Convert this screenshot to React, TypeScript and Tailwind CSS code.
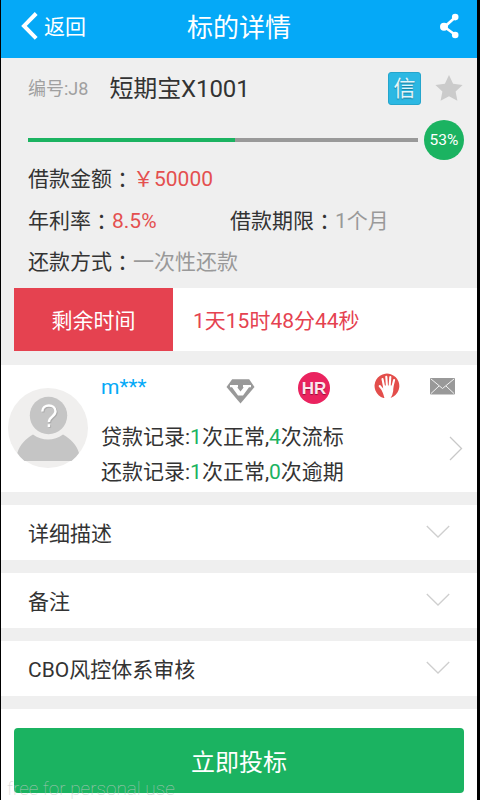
import type { ReactNode } from 'react';

const sections = ['详细描述', '备注', 'CBO风控体系审核'];

const records = [
  { label: '贷款记录', normal: 1, bad: 4, badLabel: '次流标' },
  { label: '还款记录', normal: 1, bad: 0, badLabel: '次逾期' },
];

// The TC face keeps the full-width colon centred in its box
function Label({ children }: { children: ReactNode }) {
  return (
    <span className="text-[#333]">
      {children}
      <span className="relative top-px font-['Noto_Sans_CJK_TC',sans-serif]">：</span>
    </span>
  );
}

function BackIcon() {
  return (
    <svg className="h-7 w-[17px]" viewBox="0 0 17 28" fill="none">
      <path d="M15.2 1.5 3 13.9l12.2 12.4" stroke="#fff" strokeWidth="4" />
    </svg>
  );
}

function ShareIcon() {
  return (
    <svg className="h-[26px] w-5" viewBox="0 0 20 26" fill="#fff">
      <path d="M15.5 4 4.5 14l11 8" fill="none" stroke="#fff" strokeWidth="2.6" />
      <circle cx="15.2" cy="4.1" r="3.3" />
      <circle cx="4" cy="13.8" r="4" />
      <circle cx="15.2" cy="22" r="3.3" />
    </svg>
  );
}

function StarIcon() {
  return (
    <svg className="h-[26px] w-7" viewBox="0 0 28 26" fill="#cbcbcb">
      <path d="m14 0 4.1 8.8 9.5 1.2-7 6.5 1.8 9.3-8.4-4.6-8.4 4.6 1.8-9.3-7-6.5 9.5-1.2z" />
    </svg>
  );
}

function Avatar() {
  return (
    <svg className="h-20 w-20" viewBox="0 0 80 80">
      <circle cx="40" cy="40" r="40" fill="#f0efee" />
      <path d="M9.3 65C12 57 17 51 25 46.5c9 6.7 21 6.7 30 0 8 4.5 13.5 10.5 16 18.5q-3 4.5-7.5 8h-47Q12 69.5 9.3 65z" fill="#c5c5c5" />
      <circle cx="40.5" cy="27.5" r="18.7" fill="#c5c5c5" />
      <path d="M35.3 24.5c0-8 13.2-8 13.2-.2 0 5.2-6.6 5.5-6.6 10.7M41.9 37.3v2.5" fill="none" stroke="#acacac" strokeWidth="2.4" />
      <path d="M34.3 23.5c0-8 13.2-8 13.2-.2 0 5.2-6.6 5.5-6.6 10.7M40.9 36.3v2.6" fill="none" stroke="#fff" strokeWidth="2.4" />
    </svg>
  );
}

function DiamondIcon() {
  return (
    <svg className="h-[25px] w-[29px]" viewBox="0 0 29 25">
      <path d="M6.2.3h17L28.5 8l-14 16.500L.5 8z" fill="#999" />
      <path d="M4 6h8v2.300h-.8l3.300 4.200 3.300-4.200H17V6h8v2.300h-2l-6 8.200h-5L6 8.300H4z" fill="#fff" />
    </svg>
  );
}

function HandIcon() {
  return (
    <svg className="h-[26px] w-[26px]" viewBox="0 0 26 26">
      <path d="M9.5 24.9A12.4 12.4 0 1 1 19.5 23.5L16.5 25z" fill="#e34e4b" />
      <g fill="none" stroke="#fff" strokeLinecap="round" strokeWidth="2.1">
        <path d="M10.3 15 8.5 6M13 14l-.7-10.3M15.6 14l.7-10M18 15.5l2.1-8.500M11 19.500 5.700 13" />
      </g>
      <path d="M9.300 12.500h9.700q.6 3 .2 5.500-.5 4-2.700 7.300h-6Q9.300 20.500 7.500 16.800l2 .2z" fill="#fff" />
    </svg>
  );
}

function MailIcon() {
  return (
    <svg className="h-[17px] w-[25px]" viewBox="0 0 25 17">
      <rect width="25" height="16.5" rx="1" fill="#999" />
      <path d="m1 1 11.5 9.5L24 1M1 15.5l8-7.5M24 15.5 16 8" fill="none" stroke="#f3f3f3" strokeWidth="1" />
    </svg>
  );
}

function ChevronDown() {
  return (
    <svg className="-mt-0.5 h-[14px] w-6" viewBox="0 0 24 14" fill="none">
      <path d="M.8 1 12 12 23.2 1" stroke="#cfcfcf" strokeWidth="1.3" />
    </svg>
  );
}

export default function App() {
  return (
    <div className="h-[800px] w-[480px] bg-black pr-[3px] pl-px font-[Roboto,'Noto_Sans_CJK_SC',sans-serif] text-[21px] leading-none whitespace-nowrap">
      <div className="relative flex h-full flex-col overflow-hidden bg-[#efefef]">
        {/* Header */}
        <header className="grid h-[58px] shrink-0 grid-cols-[1fr_auto_1fr] items-center bg-[#05a9f7] pr-[17px] pb-1.5 pl-5 text-white">
          <div className="flex items-center gap-1.5">
            <BackIcon />
            <span className="pt-0.5">返回</span>
          </div>
          <h1 className="mr-[3px] pt-1 text-[26px]">标的详情</h1>
          <div className="flex justify-end">
            <ShareIcon />
          </div>
        </header>

        {/* Loan summary */}
        <section className="h-[230px] shrink-0 pr-[13px] pl-[27px]">
          <div className="flex h-[60px] items-center">
            <span className="pt-0.5 text-[18px] text-[#a0a0a0]">编号:J8</span>
            <span className="ml-[21px] pt-0.5 text-[24px] tracking-[-0.1px] text-[#333]">短期宝X1001</span>
            <span className="ml-auto flex h-[33px] w-[33px] items-center justify-center rounded-[3px] border border-[#25a5cc] bg-[#2cb8e3] pt-0.5 text-[22px] text-[#e2f5fb] [text-shadow:0_1px_1px_#187b9b]">
              信
            </span>
            <span className="mr-px ml-3.5">
              <StarIcon />
            </span>
          </div>
          <div className="flex h-11 items-center gap-1.5">
            <div className="h-1 flex-1 bg-[#999]">
              <div className="h-full bg-[#1bb361]" style={{ width: '53%' }} />
            </div>
            <div className="flex h-10 w-10 items-center justify-center rounded-full bg-[#1bb361] pt-0.5 text-[15.5px] text-white">
              53%
            </div>
          </div>
          <div className="-mt-1 grid grid-cols-[202px_1fr] grid-rows-[repeat(3,41.5px)] items-center text-[#999]">
            <div className="col-span-2">
              <Label>借款金额</Label>
              <span className="text-[#e4504f]">￥50000</span>
            </div>
            <div>
              <Label>年利率</Label>
              <span className="text-[#e4504f]">8.5%</span>
            </div>
            <div>
              <Label>借款期限</Label>1个月
            </div>
            <div className="col-span-2">
              <Label>还款方式</Label>一次性还款
            </div>
          </div>
        </section>

        {/* Countdown */}
        <section className="ml-[13px] flex h-[63px] shrink-0 items-center bg-white text-[#e54250]">
          <div className="flex h-full w-[159px] items-center justify-center bg-[#e54250] pt-[3px] text-white">
            剩余时间
          </div>
          <span className="ml-5 pt-[3px]">1天15时48分44秒</span>
        </section>

        {/* Borrower */}
        <section className="mt-3.5 flex h-[127px] shrink-0 bg-white pl-[7px]">
          <div className="mt-[23px] w-[93px]">
            <Avatar />
          </div>
          <div className="flex-1">
            <div className="flex h-[46px] items-center">
              <span className="-mt-0.5 w-[125px] text-[#05a9f7]">m***</span>
              <span className="mt-1.5">
                <DiamondIcon />
              </span>
              <span className="ml-[43px] flex h-8 w-8 items-center justify-center rounded-full bg-[#ea235f] font-['Liberation_Sans',sans-serif] text-[17px] font-bold text-[#fde5ed] [text-shadow:0_1px_1px_#8f1238]">
                HR
              </span>
              <span className="-mt-1 ml-11">
                <HandIcon />
              </span>
              <span className="-mt-1 ml-[30px]">
                <MailIcon />
              </span>
            </div>
            <div className="flex">
              <div className="pt-2 text-[#333]">
                {records.map((r) => (
                  <div key={r.label} className="flex h-[35px] items-center pt-0.5">
                    {r.label}:<span className="text-[#1bb361]">{r.normal}</span>次正常,
                    <span className="text-[#1bb361]">{r.bad}</span>
                    {r.badLabel}
                  </div>
                ))}
              </div>
              <svg className="mt-[25px] mr-3.5 ml-auto h-[25px] w-[14px]" viewBox="0 0 14 25" fill="none">
                <path d="M1 1 12.5 12.5 1 24" stroke="#c8c8c8" strokeWidth="1.3" />
              </svg>
            </div>
          </div>
        </section>

        {/* Collapsed sections */}
        {sections.map((title) => (
          <section
            key={title}
            className="mt-[13px] flex h-[55px] shrink-0 items-center justify-between bg-white px-[27px] text-[#333]"
          >
            <span className="pt-[3px]">{title}</span>
            <ChevronDown />
          </section>
        ))}

        <footer className="mt-[13px] flex-1 bg-white px-[13px] pt-[19px]">
          <button className="flex h-[65px] w-full items-center justify-center rounded bg-[#1bb361] pt-1 text-[24px] text-white">
            立即投标
          </button>
        </footer>

        <span className="absolute bottom-0 left-1.5 text-[19px] leading-[23px] font-thin text-[#c4c8c6] opacity-80">
          free for personal use
        </span>
      </div>
    </div>
  );
}
